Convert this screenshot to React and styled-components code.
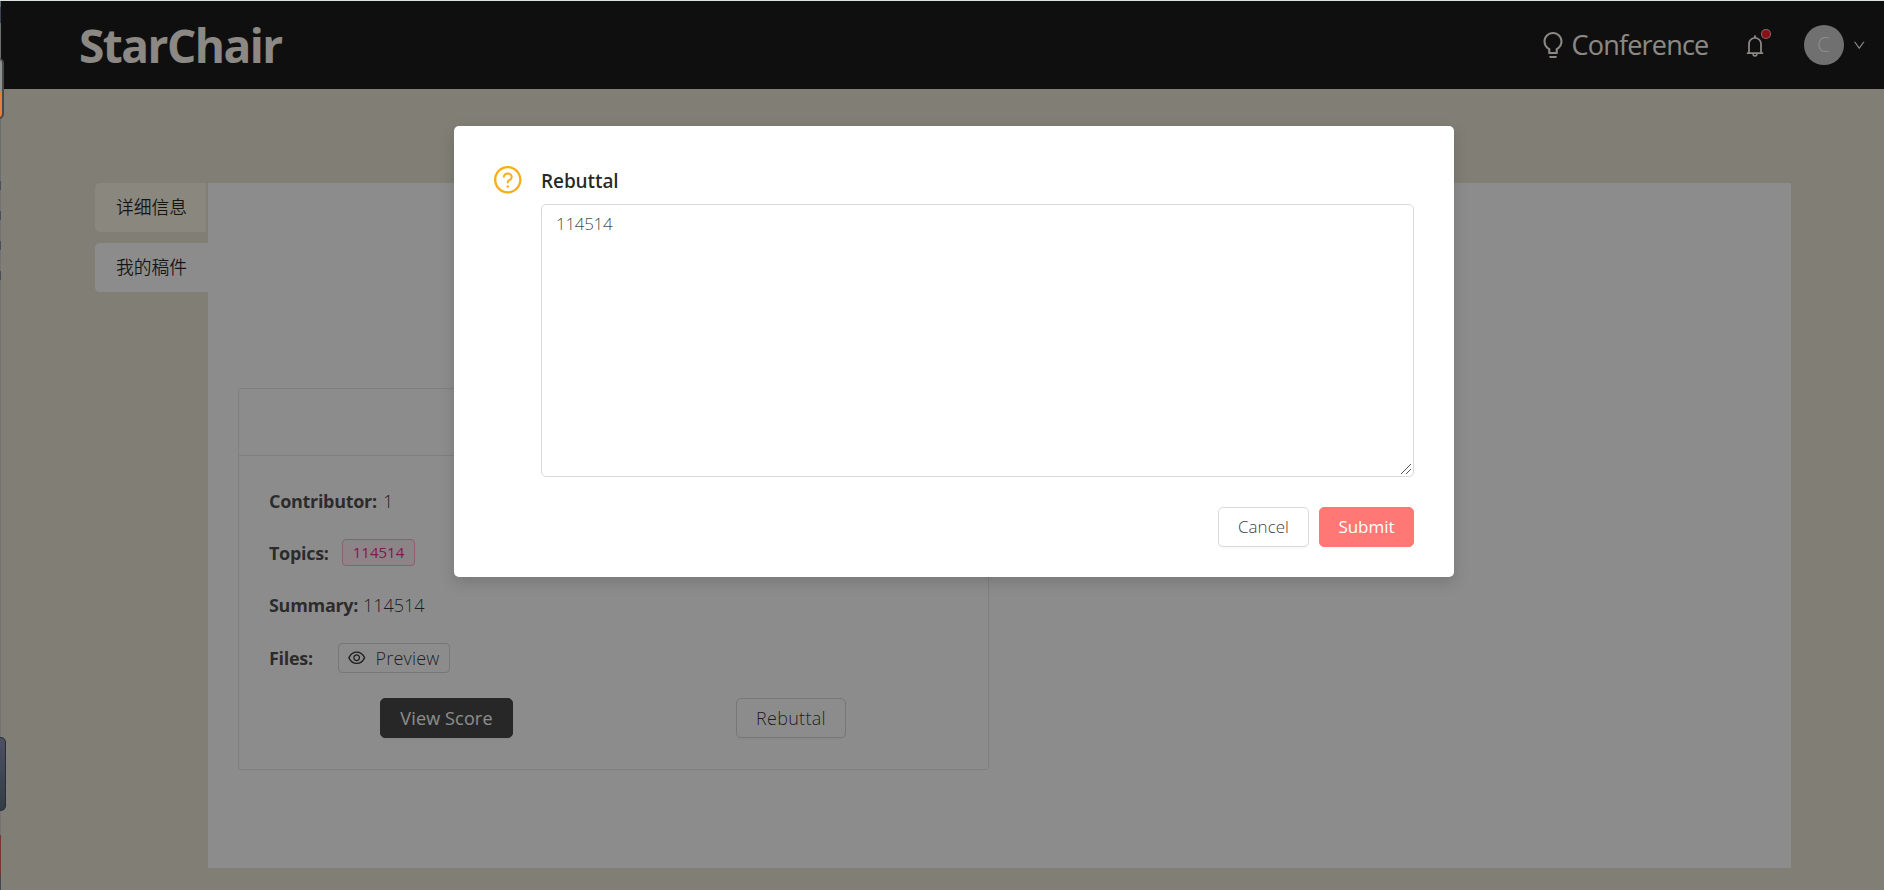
import React from "react";
import styled, { createGlobalStyle } from "styled-components";
import {
  AiOutlineBulb,
  AiOutlineBell,
  AiOutlineDown,
  AiOutlineEye,
  AiOutlineQuestionCircle,
} from "react-icons/ai";

const ICON_BOX = "64 64 896 896";

const GlobalStyle = createGlobalStyle`
  *, *::before, *::after { box-sizing: border-box; }
  body {
    margin: 0;
    overflow: hidden;
    background: #ece7d6;
    color: rgba(0, 0, 0, 0.75);
    font-family: "Open Sans", "Noto Sans CJK SC", sans-serif;
    font-size: 17px;
    font-weight: 350;
    line-height: 28px;
  }
  button, textarea { font: inherit; color: inherit; margin: 0; }
  svg { display: block; flex: none; }
`;

const Page = styled.div`
  position: relative;
  height: 890px;
  overflow: hidden;
`;

const Header = styled.header`
  display: flex;
  align-items: center;
  justify-content: space-between;
  height: 89px;
  padding: 1px 19px 0 79px;
  background: #1c1c1c;
  color: #fffaf2;
`;

const Logo = styled.div`
  font-size: 46px;
  font-weight: 700;
  line-height: 60px;
  letter-spacing: -1.5px;
`;

const HeaderTools = styled.div`
  display: flex;
  align-items: center;
`;

const ConferenceLink = styled.div`
  display: flex;
  align-items: center;
  gap: 6px;
  width: 168px;
  margin-right: 36px;
  font-size: 27px;
  font-weight: 400;
  line-height: 36px;
  letter-spacing: -0.8px;
  white-space: nowrap;
`;

const BellBadge = styled.div`
  position: relative;
  top: 1px;
  margin-right: 38px;
`;

const BadgeDot = styled.span`
  position: absolute;
  top: -6px;
  right: -5px;
  width: 10px;
  height: 10px;
  border: 1px solid rgba(255, 255, 255, 0.7);
  border-radius: 50%;
  background: #f5222d;
`;

const Avatar = styled.div`
  width: 40px;
  height: 40px;
  margin-right: 9px;
  border-radius: 50%;
  background: #ccc;
  color: #fff;
  font-size: 20px;
  line-height: 40px;
  text-align: center;
`;

const Main = styled.main`
  display: flex;
  padding: 94px 93px 0 95px;
`;

const TabList = styled.nav`
  display: flex;
  flex-direction: column;
  gap: 11px;
  width: 113px;
`;

const Tab = styled.div`
  width: ${(p) => (p.$active ? 113 : 111)}px;
  height: 49px;
  padding-left: 21px;
  border-radius: 5px 0 0 5px;
  background: ${(p) => (p.$active ? "#fff" : "#fbf6e8")};
  color: rgba(0, 0, 0, 0.85);
  font-size: 17.8px;
  line-height: 48px;
`;

const Panel = styled.section`
  flex: 1;
  height: 685px;
  padding: 205px 30px 0;
  background: #fff;
`;

const Card = styled.article`
  width: 751px;
  height: 382px;
  border: 1px solid #e8e8e8;
  border-radius: 3px;
`;

const CardHead = styled.div`
  height: 67px;
  border-bottom: 1px solid #e8e8e8;
`;

const CardBody = styled.div`
  padding: 19px 30px 0;
`;

const Field = styled.div`
  display: flex;
  align-items: center;
  height: 52.3px;
  color: rgba(0, 0, 0, 0.8);
  font-size: 18px;
  line-height: 26px;
`;

const Label = styled.span`
  width: ${(p) => p.$width}px;
  margin-top: -1px;
  color: rgba(0, 0, 0, 0.7);
  font-size: 18px;
  font-weight: 700;
  letter-spacing: -0.3px;
`;

const Value = styled.span`
  margin-top: -1px;
`;

const Topic = styled.span`
  width: 73px;
  height: 27px;
  margin-top: -1px;
  border: 1px solid #ffadd2;
  border-radius: 4px;
  background: #fff0f6;
  color: #eb2f96;
  font-size: 15px;
  font-weight: 400;
  line-height: 25px;
  text-align: center;
`;

const PreviewButton = styled.button`
  display: flex;
  align-items: center;
  gap: 10px;
  width: 112px;
  height: 30px;
  padding: 0 0 0 9px;
  border: 1px solid #d9d9d9;
  border-radius: 4px;
  background: #fff;
  font-size: 18px;
  letter-spacing: 0.2px;
`;

const Actions = styled.div`
  display: flex;
  justify-content: space-between;
  padding: 14px 112px 0 111px;
`;

const Button = styled.button`
  width: ${(p) => p.$width}px;
  height: 40px;
  padding: 0;
  border: 1px solid ${(p) => p.$fill || "#d9d9d9"};
  border-radius: 5px;
  background: ${(p) => p.$fill || "#fff"};
  box-shadow: 0 2px 0 rgba(0, 0, 0, 0.02);
  color: ${(p) => (p.$fill ? "#fff" : "rgba(0, 0, 0, 0.8)")};
  font-size: ${(p) => p.$size || 17}px;
  font-weight: ${(p) => (p.$fill ? 400 : 350)};
  line-height: 38px;
  letter-spacing: ${(p) => p.$tracking || 0}px;
  text-align: center;
`;

const Overlay = styled.div`
  position: absolute;
  inset: 0;
  display: flex;
  align-items: flex-start;
  justify-content: center;
  padding: 126px 0 0 24px;
  background: rgba(0, 0, 0, 0.45);
`;

const Dialog = styled.div`
  width: 1000px;
  height: 451px;
  padding: 40px 40px 0;
  border-radius: 5px;
  background: #fff;
  box-shadow: 0 5px 15px rgba(0, 0, 0, 0.15);
`;

const DialogContent = styled.div`
  display: flex;
  gap: 19.5px;
`;

const DialogForm = styled.div`
  flex: 1;
`;

const DialogTitle = styled.div`
  height: 38px;
  padding-top: 1px;
  color: rgba(0, 0, 0, 0.85);
  font-size: 19px;
  font-weight: 550;
  line-height: 28px;
  letter-spacing: -0.1px;
`;

const TextAreaFrame = styled.div`
  position: relative;
  width: 873px;
`;

const TextArea = styled.textarea`
  display: block;
  width: 100%;
  height: 273px;
  padding: 5px 14px;
  border: 1px solid #d9d9d9;
  border-radius: 5px;
  outline: none;
  resize: none;
  color: rgba(0, 0, 0, 0.75);
  font-size: 17px;
  letter-spacing: -0.3px;
`;

const ResizeGrip = styled.svg`
  position: absolute;
  right: 3px;
  bottom: 3px;
  stroke: #555;
`;

const DialogButtons = styled.div`
  display: flex;
  justify-content: flex-end;
  gap: 10px;
  margin-top: 30px;
`;

const TopEdge = styled.div`
  position: absolute;
  inset: 0 0 auto 0;
  height: 1px;
  background: #dce2e3;
`;

const SideEdge = styled.div`
  position: absolute;
  inset: 0 auto 0 0;
  width: 1px;
  background: linear-gradient(
    #66696d 0 7px, #3c4556 7px 23px, #6c6d70 23px 181px, #4b4e56 181px 190px,
    #737377 190px 211px, #4b4e56 211px 220px, #737377 220px 241px,
    #4b4e56 241px 250px, #737377 250px 271px, #4b4e56 271px 280px,
    #737377 280px 835px, #7a3530 835px 876px, #44454f 876px
  );
`;

const OrangeHandle = styled.div`
  position: absolute;
  top: 58px;
  left: -6px;
  width: 10px;
  height: 61px;
  border: 2px solid #484a49;
  border-radius: 0 5px 5px 0;
  background: linear-gradient(#8f9191 0 32px, #e3803f 32px);
`;

const BlueHandle = styled.div`
  position: absolute;
  top: 737px;
  left: -6px;
  width: 12px;
  height: 74px;
  border: 1px solid #292c3b;
  border-radius: 0 5px 5px 0;
  background: linear-gradient(#4b5063, #343d45);
`;

export default function App() {
  return (
    <Page>
      <GlobalStyle />
      <Header>
        <Logo>StarChair</Logo>
        <HeaderTools>
          <ConferenceLink>
            <AiOutlineBulb viewBox={ICON_BOX} size={26} />
            Conference
          </ConferenceLink>
          <BellBadge>
            <AiOutlineBell viewBox={ICON_BOX} size={22} />
            <BadgeDot />
          </BellBadge>
          <Avatar>C</Avatar>
          <AiOutlineDown viewBox={ICON_BOX} size={12.5} />
        </HeaderTools>
      </Header>
      <Main>
        <TabList>
          <Tab>详细信息</Tab>
          <Tab $active>我的稿件</Tab>
        </TabList>
        <Panel>
          <Card>
            <CardHead />
            <CardBody>
              <Field>
                <Label $width={114}>Contributor:</Label>
                <Value>1</Value>
              </Field>
              <Field>
                <Label $width={73}>Topics:</Label>
                <Topic>114514</Topic>
              </Field>
              <Field>
                <Label $width={94}>Summary:</Label>
                <Value>114514</Value>
              </Field>
              <Field>
                <Label $width={69}>Files:</Label>
                <PreviewButton>
                  <AiOutlineEye viewBox={ICON_BOX} size={17.5} />
                  Preview
                </PreviewButton>
              </Field>
              <Actions>
                <Button $width={133} $fill="#484848" $size={18} $tracking={0.15}>View Score</Button>
                <Button $width={110} $size={18} $tracking={0.3}>Rebuttal</Button>
              </Actions>
            </CardBody>
          </Card>
        </Panel>
      </Main>
      <Overlay>
        <Dialog>
          <DialogContent>
            <AiOutlineQuestionCircle viewBox={ICON_BOX} size={27.5} color="#faad14" />
            <DialogForm>
              <DialogTitle>Rebuttal</DialogTitle>
              <TextAreaFrame>
                <TextArea defaultValue="114514" />
                <ResizeGrip width="10" height="10" viewBox="0 0 10 10">
                  <path d="M0 10 10 0M5 10l5-5" />
                </ResizeGrip>
              </TextAreaFrame>
            </DialogForm>
          </DialogContent>
          <DialogButtons>
            <Button $width={91}>Cancel</Button>
            <Button $width={95} $fill="#ff7875">Submit</Button>
          </DialogButtons>
        </Dialog>
      </Overlay>
      <SideEdge />
      <TopEdge />
      <OrangeHandle />
      <BlueHandle />
    </Page>
  );
}
